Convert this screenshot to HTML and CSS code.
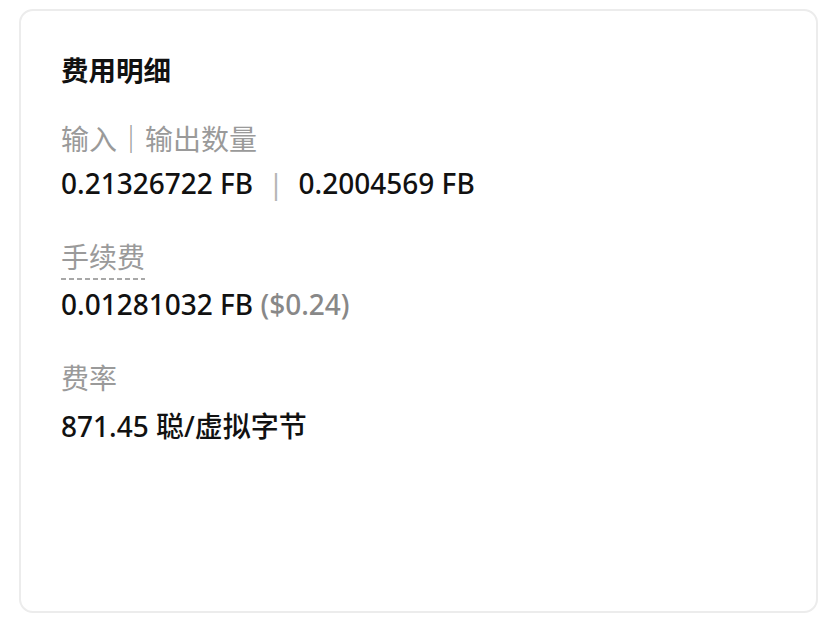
FILE: index.html
```html
<!DOCTYPE html>
<html lang="zh-CN">
<head>
<meta charset="UTF-8">
<meta name="viewport" content="width=device-width, initial-scale=1">
<title>费用明细</title>
<link rel="stylesheet" href="styles.css">
</head>
<body>
<div class="card">
    <div class="title">费用明细</div>
    <div class="item">
        <div class="label">输入｜输出数量</div>
        <div class="value">0.21326722 FB<span class="sep">|</span>0.2004569 FB</div>
    </div>
    <div class="item">
        <div class="label"><span class="dashed">手续费</span></div>
        <div class="value">0.01281032 FB <span class="muted">($0.24)</span></div>
    </div>
    <div class="item">
        <div class="label">费率</div>
        <div class="value">871.45 聪/虚拟字节</div>
    </div>
</div>
</body>
</html>
```

FILE: styles.css
```css
* { padding: 0; margin: 0; }
body {
    background: #fff;
    padding: 9px 14px 0 19px;
    font-family: "Noto Sans", "Noto Sans CJK SC", sans-serif;
    color: #111;
}
.card {
    box-sizing: border-box;
    height: 604px;
    border: 2px solid #ececec;
    border-radius: 14px;
    padding: 40px;
}
.title {
    font-size: 27.5px;
    font-weight: 700;
    line-height: 40px;
    margin-bottom: 28px;
}
.item + .item { margin-top: 30px; }
.label {
    font-size: 28px;
    line-height: 40px;
    color: #9a9a9a;
}
.dashed {
    display: inline-block;
    line-height: 36px;
    padding-bottom: 5px;
    background: linear-gradient(to right, #a8a8a8 62%, transparent 0) left bottom / 8px 2px repeat-x;
}
.value {
    font-size: 28px;
    font-weight: 500;
    line-height: 48px;
}
.item:last-child .value { margin-top: 4px; }
.sep {
    color: #b5b5b5;
    font-weight: 400;
    margin: 0 15px;
}
.muted { color: #888; }
```
